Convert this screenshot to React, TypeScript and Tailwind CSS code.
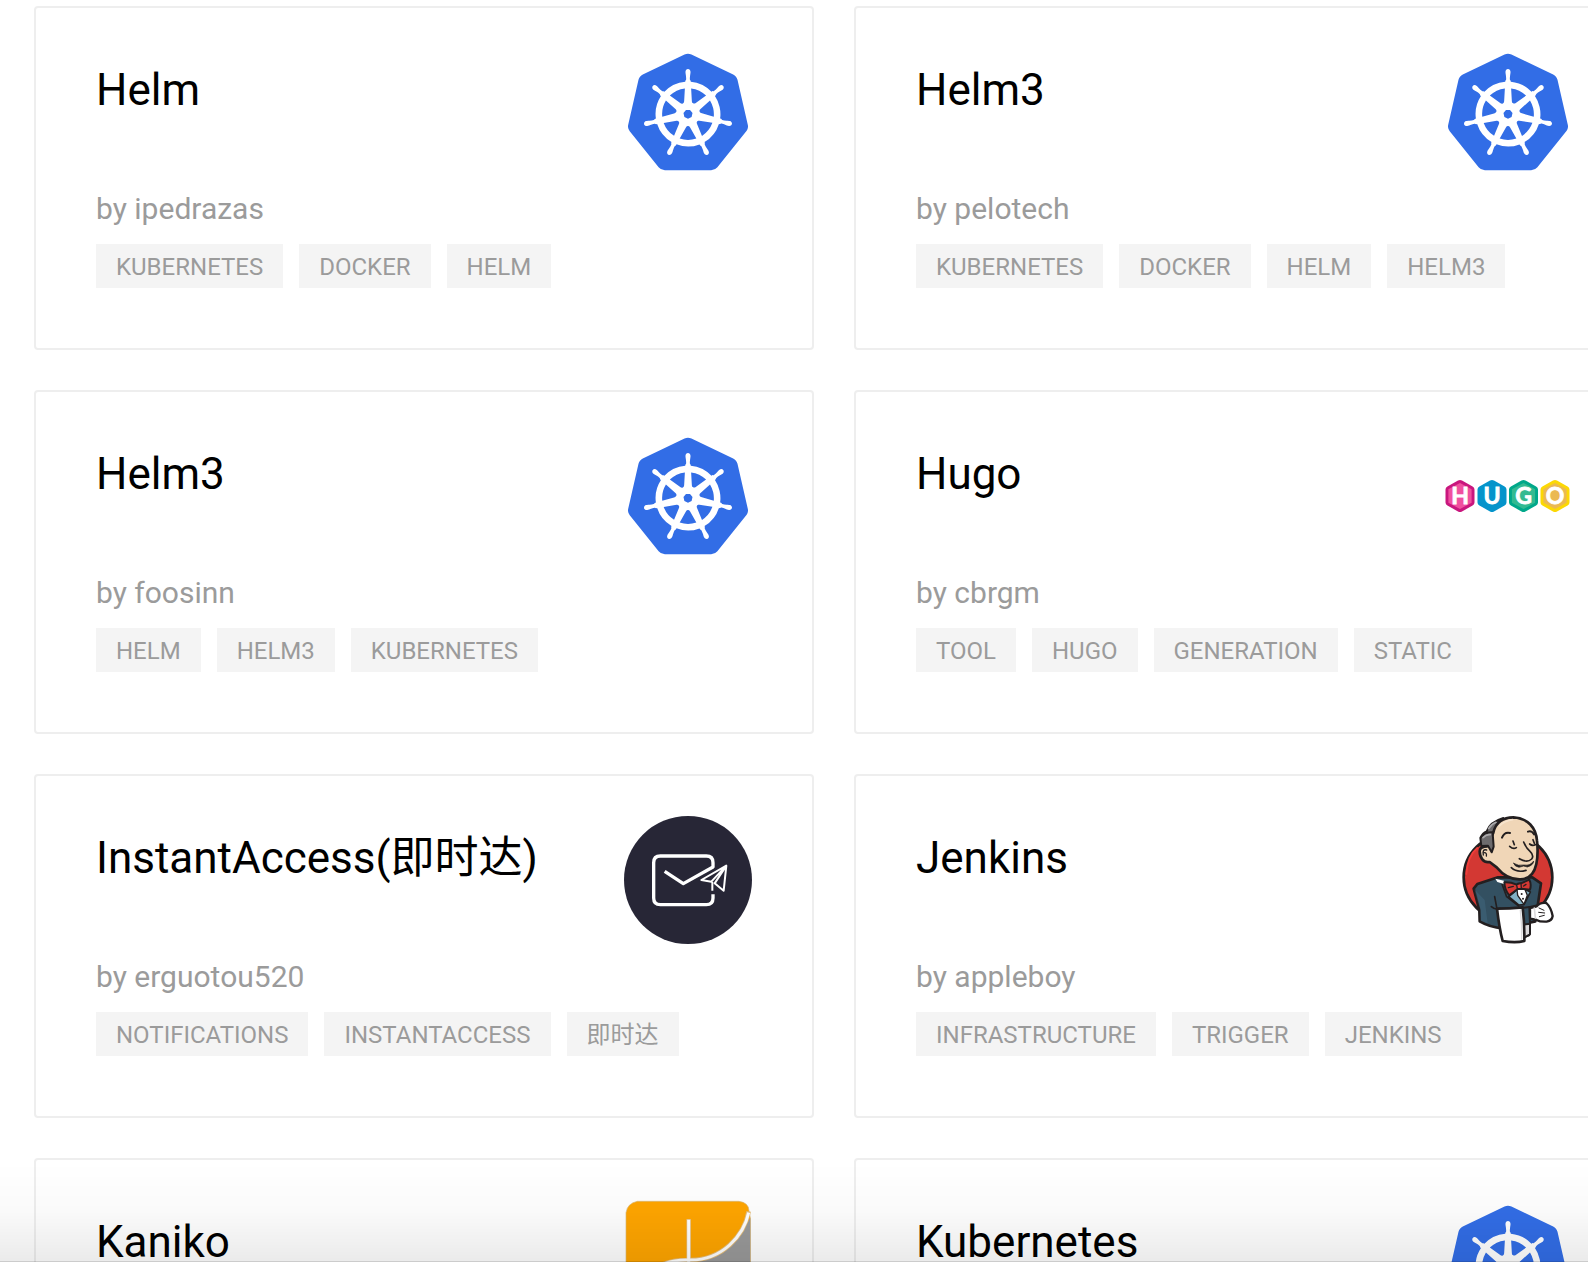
import type { ReactNode } from "react";
import { SiKubernetes } from "react-icons/si";

type Plugin = {
  id: string;
  name: string;
  author: string;
  tags: string[];
  logo: ReactNode;
};

function KubernetesLogo() {
  return (
    <div className="flex size-32 items-center justify-center">
      <SiKubernetes className="size-[120px] text-[#326de6]" />
    </div>
  );
}

const hugoLetters = [
  { letter: "H", x: 16, edge: "#c9177e", fill: "#f0509f" },
  { letter: "U", x: 48, edge: "#0594cb", fill: "#0594cb" },
  { letter: "G", x: 79.5, edge: "#00a88a", fill: "#33ba91" },
  { letter: "O", x: 111, edge: "#fcd804", fill: "#ebb951" }
];

function HugoLogo() {
  return (
    <svg viewBox="0 0 128 128" className="size-32">
      {hugoLetters.map((h) => (
        <g key={h.letter} transform={`translate(${h.x} 64)`}>
          <path d="M-2 -15.4 Q0 -16.4 2 -15.4 L12.6 -9.6 Q14.5 -8.6 14.5 -6.6 V6.6 Q14.5 8.6 12.6 9.6 L2 15.4 Q0 16.4 -2 15.4 L-12.6 9.6 Q-14.5 8.6 -14.5 6.6 V-6.6 Q-14.5 -8.6 -12.6 -9.6 Z" fill={h.edge} />
          <path d="M0 -13 L11.6 -6.8 V6.8 L0 13 L-11.6 6.8 V-6.8 Z" fill={h.fill} />
          <text y="8" textAnchor="middle" fill="#fff" stroke="#fff" strokeWidth="0.8" fontSize="23" fontWeight="700" fontFamily="Lato, sans-serif">
            {h.letter}
          </text>
        </g>
      ))}
    </svg>
  );
}

function InstantAccessLogo() {
  return (
    <svg viewBox="42 48 384 384" className="size-32" fill="none" stroke="#fff" strokeLinejoin="round">
      <circle cx="234" cy="240" r="192" fill="#272636" stroke="none" />
      <path d="M309 283 V294 Q309 314 289 314 H151 Q131 314 131 294 V188 Q131 168 151 168 H289 Q309 168 309 188 V201 L220 251 L164 214" strokeWidth="10" />
      <path d="M349 197 L274 240 L304 245 L349 197 L341 272 L314 250 L349 197 M307 246 V272" strokeWidth="6" />
    </svg>
  );
}

function JenkinsLogo() {
  return (
    <svg viewBox="12 48 384 384" className="size-32" stroke="#231f20" strokeWidth="8" strokeLinejoin="round" strokeLinecap="round">
      <ellipse cx="204" cy="232" rx="133" ry="130" fill="#d33833" />
      <path d="M79 222 Q82 168 112 144" fill="none" stroke="#ef3d3a" strokeWidth="6" />
      {/* jacket */}
      <path d="M174 232 L112 252 L101 266 L118 330 L119 364 Q150 382 188 385 L286 364 L270 322 L293 317 L303 250 L277 232 Z" fill="#335061" />
      <path d="M170 242 L186 272 L171 290 L179 326 L248 318 L278 276 L272 240 Z" fill="#335061" stroke="none" />
      <path d="M103 268 L121 330 L122 362 L143 370 L134 300 Z" fill="#49728b" stroke="none" opacity=".35" />
      <path d="M154 320 Q166 331 182 326 M164 290 L170 322 M186 252 L200 290 L236 318" fill="none" strokeWidth="5" />
      {/* shirt */}
      <path d="M206 290 L229 270 L251 266 L271 276 L252 314 L236 315 Z" fill="#81b0c4" strokeWidth="5" />
      <path d="M231 268 L254 266 L262 286 L252 313 L233 286 Z" fill="#fff" strokeWidth="4" />
      <circle cx="245" cy="282" r="3" fill="#231f20" stroke="none" />
      <circle cx="249" cy="296" r="3" fill="#231f20" stroke="none" />
      <path d="M166 236 L192 242 V252 L172 246 Z" fill="#fff" stroke="none" />
      {/* head */}
      <path d="M160 98 C166 68 190 52 220 52 C264 54 288 84 291 122 C294 150 294 168 289 192 C282 224 264 239 238 238 C208 238 188 224 170 202 L149 186 C130 190 119 172 119 154 C119 144 128 139 142 139 Z" fill="#f0d6b7" />
      <path d="M124 138 L121 114 Q128 98 140 94 Q150 66 190 54 Q166 68 158 100 L161 140 L155 157 L144 137 Z" fill="#6d6b6d" strokeWidth="6" />
      <path d="M123 112 Q137 95 157 97" fill="none" strokeWidth="6" />
      <path d="M146 86 Q153 73 168 67 M129 113 Q139 102 151 104" fill="none" stroke="#aaa9ab" strokeWidth="5" />
      <path d="M178 78 Q194 62 218 59" fill="none" stroke="#f7e4cd" strokeWidth="5" />
      <path d="M140 150 Q126 146 130 165 M133 158 Q141 158 139 168" fill="none" strokeWidth="4" />
      {/* face */}
      <path d="M186 113 Q193 95 210 99 M264 95 Q275 91 282 103" fill="none" strokeWidth="6" />
      <path d="M209 139 Q220 149 229 143 M269 132 Q277 139 286 134 M219 123 L223 134 M279 119 L283 130" fill="none" strokeWidth="5" />
      <path d="M251 126 Q258 144 270 154 Q283 166 275 177 Q261 190 238 176" fill="none" strokeWidth="5" />
      <path d="M221 190 Q235 199 252 195 Q271 198 281 183 Q281 195 262 201 L251 198 L237 202 Q224 200 221 190 Z" fill="#231f20" strokeWidth="2" />
      <path d="M214 203 Q231 219 258 211" fill="none" strokeWidth="5" />
      {/* bow tie */}
      <path d="M193 247 Q212 246 230 254 Q233 249 243 250 L268 239 Q275 252 270 269 L245 266 L233 267 L208 286 Q194 271 193 247 Z" fill="#d33833" strokeWidth="6" />
      <path d="M230 254 L232 266 L244 266 L243 250 Z" fill="#ef3d3a" strokeWidth="4" />
      <path d="M205 263 L220 259 M258 253 L251 258" fill="none" strokeWidth="4" />
      {/* cloth and glove */}
      <path d="M270 324 L290 319 Q300 306 319 309 Q333 322 338 348 Q336 362 320 365 Q300 366 288 359 L270 356 Z" fill="#fff" strokeWidth="7" />
      <path d="M283 324 L286 354" fill="none" stroke="#dbd9db" strokeWidth="5" />
      <path d="M297 324 L312 331 M296 337 L314 339 M298 350 L313 346" fill="none" strokeWidth="3" />
      <path d="M243 324 L268 321 L270 370 L267 406 L247 413 Z" fill="#335061" strokeWidth="6" />
      <path d="M247 374 L270 371 V403 L247 416 Z" fill="#dbd9db" strokeWidth="6" />
      <path d="M171 326 Q208 326 248 322 Q254 370 253 423 Q226 430 188 423 Q178 386 171 326 Z" fill="#fff" />
      <path d="M241 330 Q246 375 245 418" fill="none" stroke="#dbd9db" strokeWidth="4" />
    </svg>
  );
}

function KanikoLogo() {
  return (
    <svg viewBox="72 150 384 384" className="size-32">
      <path d="M112 154 H417 Q446 158 447 182 L451 204 V496 Q451 530 417 530 H112 Q78 530 78 496 V188 Q82 160 112 154 Z" fill="#ffa500" stroke="#d9b877" strokeWidth="2" />
      <path d="M451 204 V496 Q451 530 417 530 H266 V330 Q380 326 451 204 Z" fill="#999" />
      <path d="M446 184 Q436 242 389 285 Q337 332 266 330 Q190 328 150 370 M266 207 V530" fill="none" stroke="#e6bd78" strokeWidth="14" />
      <path d="M446 188 Q434 244 389 285 Q337 332 266 330 Q190 328 150 370 M266 209 V530" fill="none" stroke="#fff" strokeWidth="9" />
    </svg>
  );
}

const plugins: Plugin[] = [
  { id: "helm", name: "Helm", author: "ipedrazas", tags: ["kubernetes", "docker", "helm"], logo: <KubernetesLogo /> },
  { id: "helm3-pelotech", name: "Helm3", author: "pelotech", tags: ["kubernetes", "docker", "helm", "helm3"], logo: <KubernetesLogo /> },
  { id: "helm3-foosinn", name: "Helm3", author: "foosinn", tags: ["helm", "helm3", "kubernetes"], logo: <KubernetesLogo /> },
  { id: "hugo", name: "Hugo", author: "cbrgm", tags: ["tool", "hugo", "generation", "static"], logo: <HugoLogo /> },
  { id: "instantaccess", name: "InstantAccess(即时达)", author: "erguotou520", tags: ["notifications", "instantaccess", "即时达"], logo: <InstantAccessLogo /> },
  { id: "jenkins", name: "Jenkins", author: "appleboy", tags: ["infrastructure", "trigger", "jenkins"], logo: <JenkinsLogo /> },
  { id: "kaniko", name: "Kaniko", author: "", tags: [], logo: <KanikoLogo /> },
  { id: "kubernetes", name: "Kubernetes", author: "", tags: [], logo: <KubernetesLogo /> }
];

function PluginCard({ plugin }: { plugin: Plugin }) {
  return (
    <article className="min-h-[344px] rounded border-2 border-[#eee] px-[60px] pt-10 pb-[60px]">
      <div className="flex items-start justify-between">
        <h2 className="pt-4 text-[44px] leading-[52px] whitespace-nowrap text-black">{plugin.name}</h2>
        <div className="shrink-0">{plugin.logo}</div>
      </div>
      {plugin.author && <p className="mt-3 text-[30px] leading-[42px] text-[#9b9b9b]">by {plugin.author}</p>}
      {plugin.tags.length > 0 && (
        <ul className="mt-[14px] flex flex-wrap gap-4">
          {plugin.tags.map((tag) => (
            <li key={tag} className="bg-[#f4f4f4] px-5 pt-[2px] text-[24px] leading-[42px] text-[#9b9b9b] uppercase">
              {tag}
            </li>
          ))}
        </ul>
      )}
    </article>
  );
}

export default function App() {
  return (
    <main className="relative h-screen overflow-hidden bg-white font-['Roboto','Noto_Sans_CJK_SC',sans-serif]">
      <div className="-mr-[46px] grid grid-cols-2 gap-10 pt-[6px] pl-[34px]">
        {plugins.map((plugin) => (
          <PluginCard key={plugin.id} plugin={plugin} />
        ))}
      </div>
      {/* fade at the bottom edge of the list */}
      <div className="pointer-events-none absolute inset-x-0 bottom-0 h-[100px] border-b border-black/20 bg-linear-to-b from-black/0 via-black/2 to-black/8" />
    </main>
  );
}
